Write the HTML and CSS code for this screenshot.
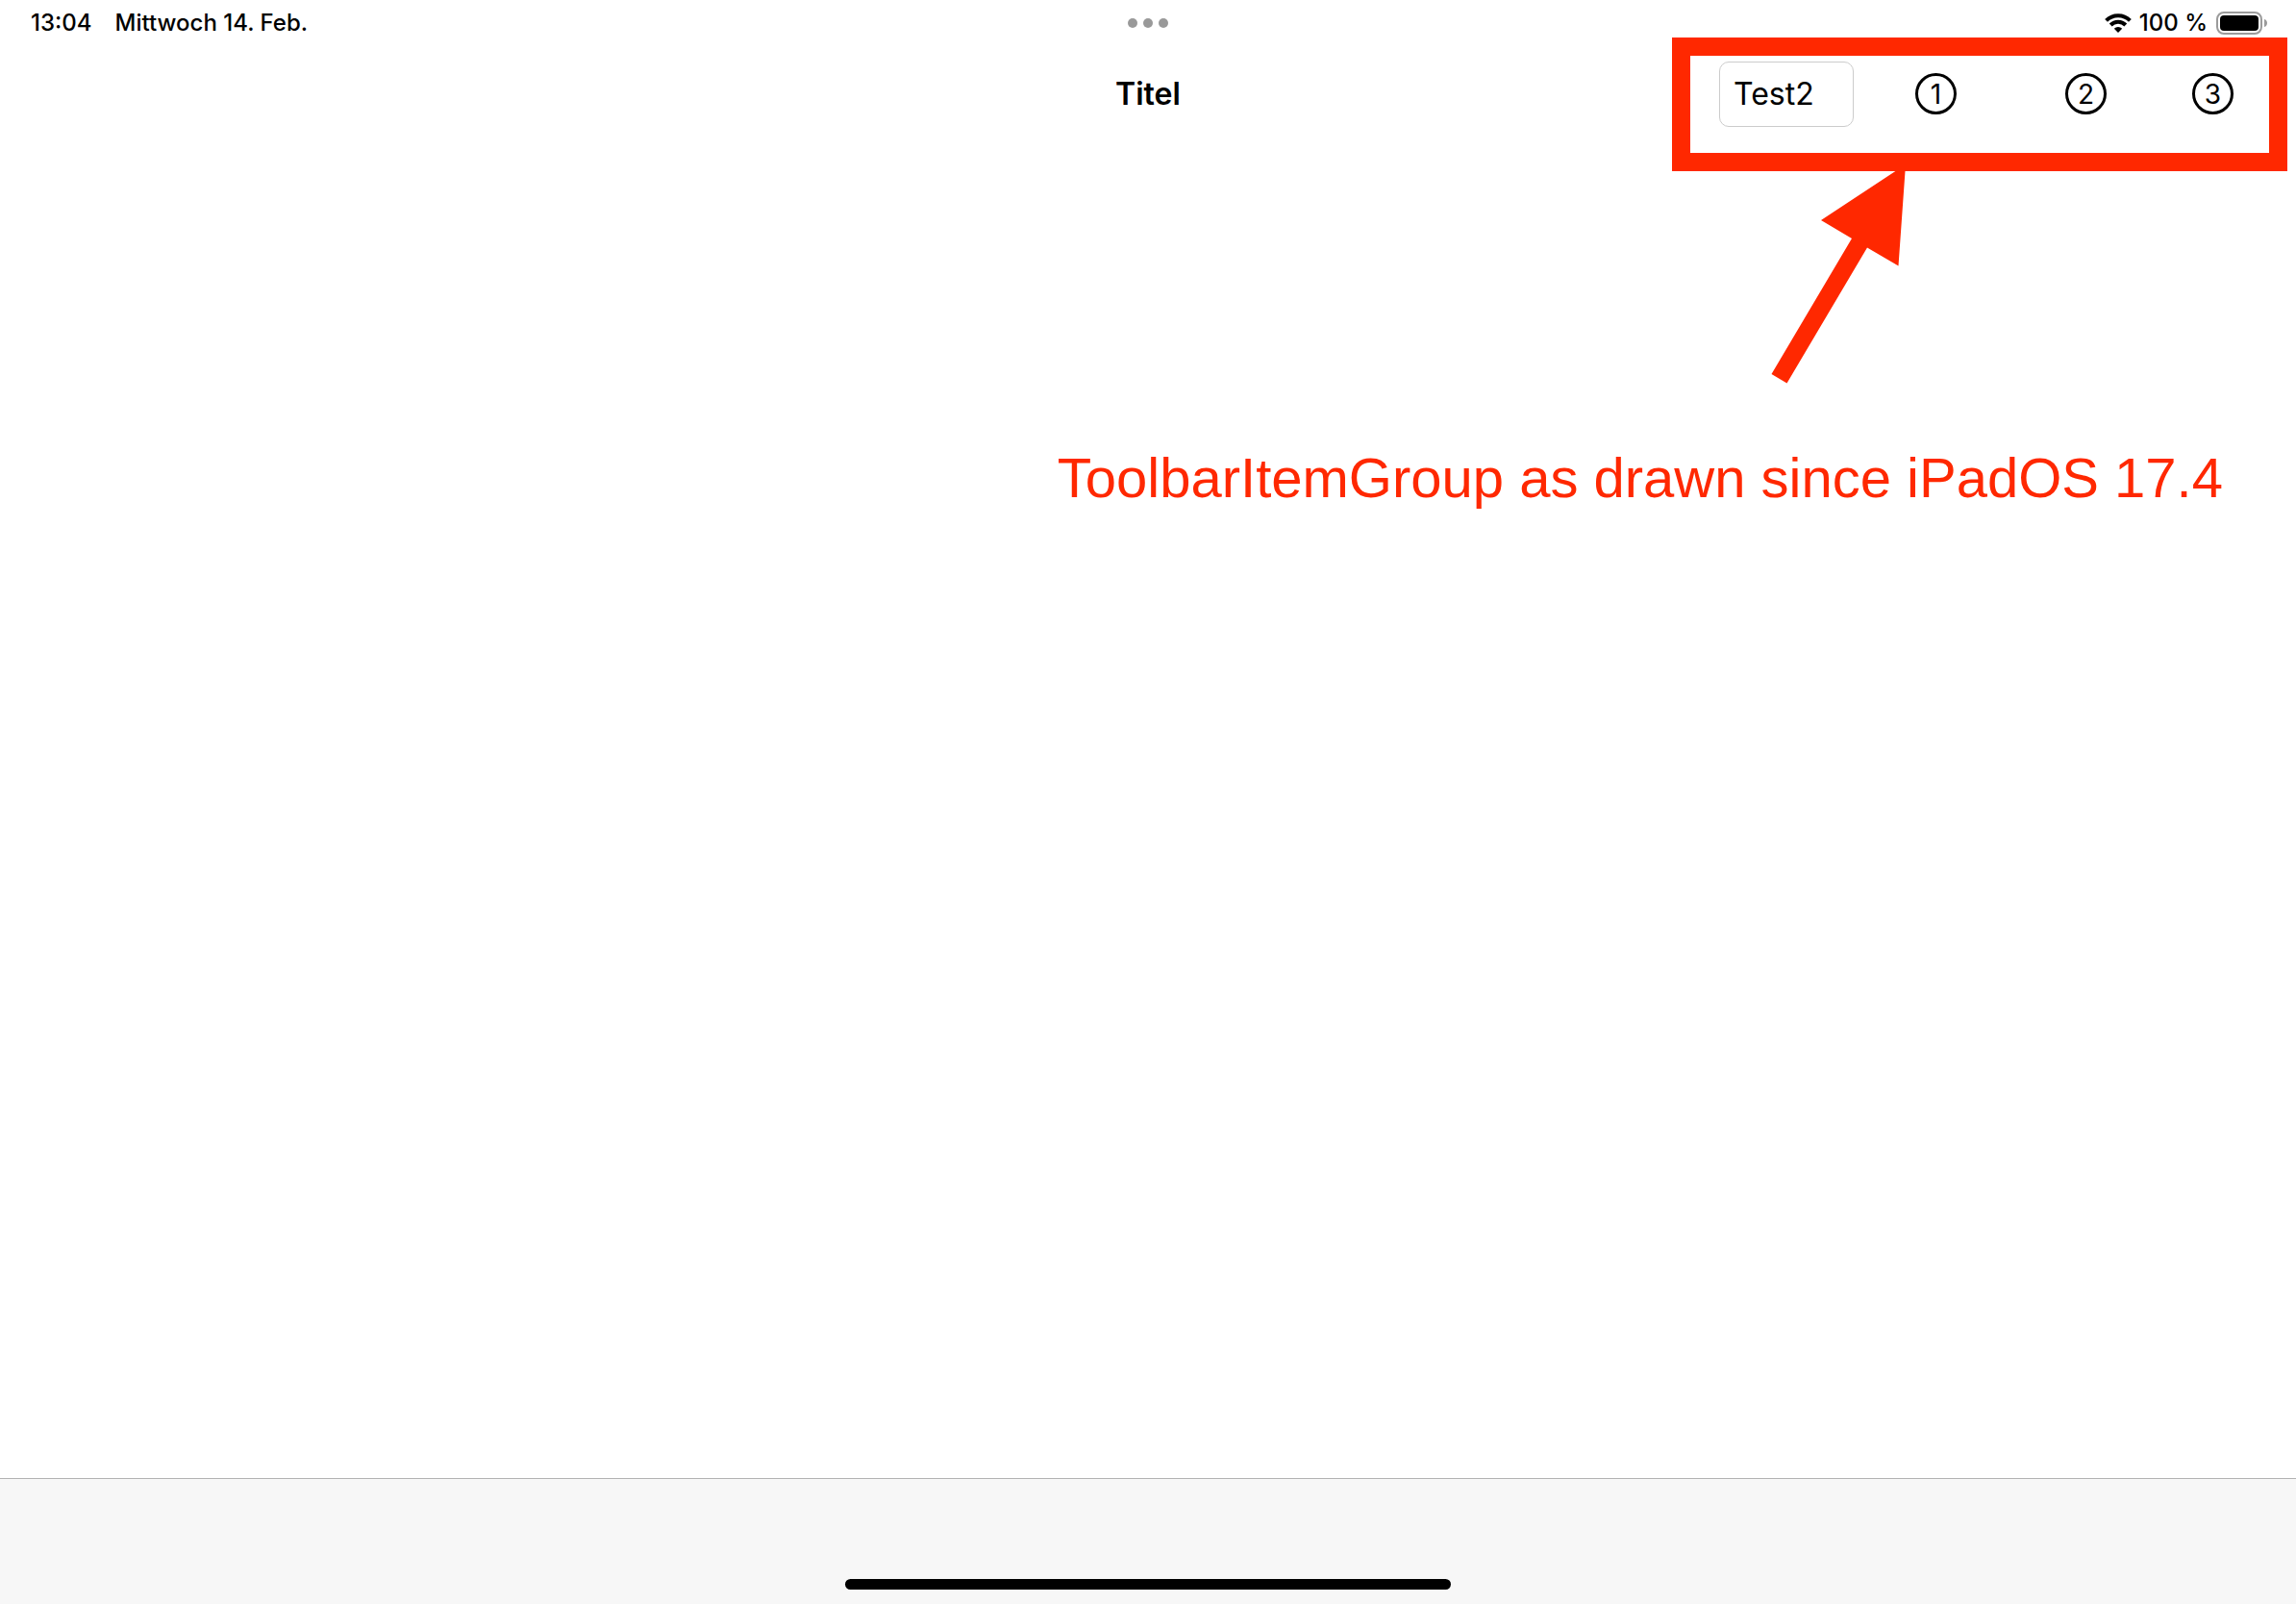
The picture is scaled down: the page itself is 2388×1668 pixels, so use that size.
FILE: index.html
```html
<!DOCTYPE html>
<html lang="de">
<head>
<meta charset="utf-8">
<meta name="viewport" content="width=device-width, initial-scale=1">
<title>Titel</title>
<link rel="stylesheet" href="styles.css">
</head>
<body>
<div class="status-bar">
  <div class="status-left"><time>13:04</time><span>Mittwoch 14. Feb.</span></div>
  <button class="multitask" type="button" aria-label="Multitasking"><i></i><i></i><i></i></button>
  <div class="status-right">
    <svg class="wifi" viewBox="0 0 28 20" aria-hidden="true">
      <g fill="none" stroke="#000" stroke-width="4">
        <path d="M1.6 7.3a17.6 17.6 0 0 1 24.8 0"/>
        <path d="M6.2 12a11 11 0 0 1 15.6 0"/>
      </g>
      <path d="M14 20l-4.2-4.3a6 6 0 0 1 8.4 0z"/>
    </svg>
    <span>100 %</span>
    <svg class="battery" viewBox="0 0 54 24" aria-hidden="true">
      <rect x="2" y="1" width="46" height="22" rx="7" fill="none" stroke="#9b9b9b" stroke-width="2"/>
      <rect x="5" y="4" width="40" height="16" rx="4"/>
      <path d="M51 8c4 1 4 7 0 8z" fill="#9b9b9b"/>
    </svg>
  </div>
</div>
<header class="nav-bar">
  <h1>Titel</h1>
  <div class="toolbar-group">
    <input class="field" type="text" value="Test2" aria-label="Test2">
    <div class="actions">
      <button class="circle circle-first" type="button">1</button>
      <button class="circle" type="button">2</button>
      <button class="circle" type="button">3</button>
    </div>
  </div>
</header>
<main>
  <svg class="arrow" viewBox="0 0 141 228" aria-hidden="true">
    <path d="M140 0L132.500 105.500L100 86.500L16.500 227.500L.5 218L84 77L52 58z"/>
  </svg>
  <p class="note">ToolbarItemGroup as drawn since iPadOS 17.4</p>
</main>
<footer class="bottom-bar"><div class="home-indicator"></div></footer>
</body>
</html>
```
FILE: styles.css
```css
* {
  box-sizing: border-box;
}

body {
  margin: 0;
  min-height: 100vh;
  display: flex;
  flex-direction: column;
  background: #fff;
  color: #000;
  font-family: Inter, "Liberation Sans", sans-serif;
}

button,
input {
  font: inherit;
  color: inherit;
  background: none;
  border: 0;
  margin: 0;
  padding: 0;
}

.status-bar {
  height: 48px;
  display: grid;
  grid-template-columns: 1fr auto 1fr;
  align-items: center;
  padding: 0 30px;
  font-size: 24px;
  line-height: 28px;
  font-weight: 500;
}

.status-left {
  display: flex;
  gap: 24px;
  padding-left: 2px;
}

.status-right {
  display: flex;
  align-items: center;
  justify-content: flex-end;
  gap: 8px;
}

.multitask {
  display: flex;
  gap: 6px;
}

.multitask i {
  width: 10px;
  height: 10px;
  border-radius: 50%;
  background: #999;
}

.wifi {
  width: 28px;
  height: 20px;
}

.battery {
  width: 54px;
  height: 24px;
}

.nav-bar {
  height: 99px;
  display: grid;
  grid-template-columns: 1fr auto 1fr;
  align-items: center;
  padding: 0 65px;
}

h1 {
  grid-column: 2;
  margin: 0;
  font-size: 32px;
  line-height: 40px;
  font-weight: 600;
}

.toolbar-group {
  position: relative;
  justify-self: end;
  display: flex;
  align-items: center;
  gap: 64px;
}

/* highlight frame over the group */
.toolbar-group::after {
  content: "";
  position: absolute;
  inset: -25px -56px -46px -49px;
  border: 19px solid #ff2800;
  pointer-events: none;
}

.field {
  width: 140px;
  height: 68px;
  padding: 0 14px;
  border: 1px solid #ccc;
  border-radius: 10px;
  font-size: 32px;
}

.actions {
  display: flex;
  gap: 89px;
}

.circle {
  width: 43px;
  height: 43px;
  border: 3px solid #000;
  border-radius: 50%;
  font-size: 28px;
  line-height: 36px;
  font-weight: 400;
}

.circle-first {
  margin-right: 24px;
}

main {
  flex: 1;
  display: flex;
  flex-direction: column;
  align-items: flex-end;
  gap: 64px;
  padding: 24px 76px 0;
  color: #ff2800;
}

.arrow {
  width: 141px;
  height: 228px;
  margin-right: 329px;
  fill: currentColor;
}

.note {
  margin: 0;
  font-family: "Liberation Sans", Arial, sans-serif;
  font-size: 58px;
  line-height: 68px;
}

.bottom-bar {
  height: 131px;
  display: flex;
  justify-content: center;
  align-items: flex-end;
  padding-bottom: 15px;
  border-top: 1px solid #b2b2b2;
  background: #f7f7f7;
}

.home-indicator {
  width: 630px;
  height: 11px;
  border-radius: 6px;
  background: #000;
}
```
